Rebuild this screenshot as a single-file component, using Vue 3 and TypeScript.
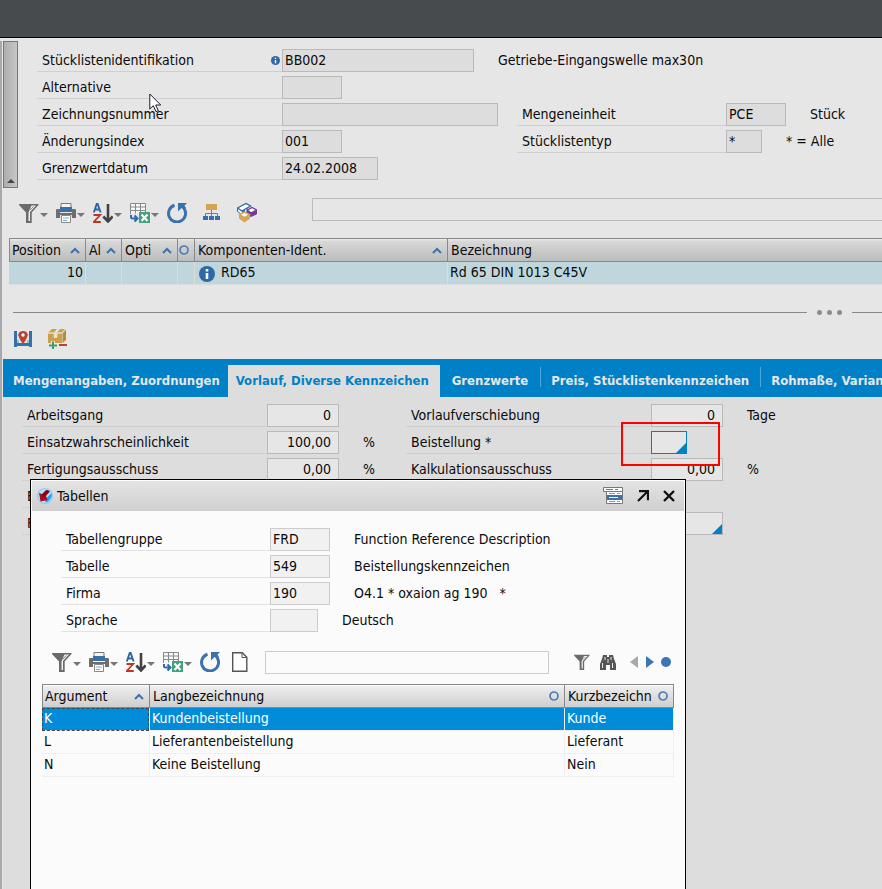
<script setup lang="ts">
interface Field {
  id: string
  label: string
  value: string
  size: string
  note?: string
  info?: boolean
  lookup?: boolean
  focused?: boolean
}

interface Tab {
  label: string
  active?: boolean
  divider?: boolean
}

const headLeft: Field[] = [
  { id: 'stkl-id', label: 'Stücklistenidentifikation', value: 'BB002', size: 'w192', note: 'Getriebe-Eingangswelle max30n', info: true },
  { id: 'alternative', label: 'Alternative', value: '', size: 'w60' },
  { id: 'zeichnung', label: 'Zeichnungsnummer', value: '', size: 'w216' },
  { id: 'index', label: 'Änderungsindex', value: '001', size: 'w60' },
  { id: 'grenzdatum', label: 'Grenzwertdatum', value: '24.02.2008', size: 'w96' },
]

const headRight: Field[] = [
  { id: 'einheit', label: 'Mengeneinheit', value: 'PCE', size: 'w60', note: 'Stück' },
  { id: 'typ', label: 'Stücklistentyp', value: '*', size: 'w36', note: '* = Alle' },
]

const tabs: Tab[] = [
  { label: 'Mengenangaben, Zuordnungen' },
  { label: 'Vorlauf, Diverse Kennzeichen', active: true },
  { label: 'Grenzwerte' },
  { label: 'Preis, Stücklistenkennzeichen', divider: true },
  { label: 'Rohmaße, Varianten', divider: true },
]

const panelLeft: Field[] = [
  { id: 'arbeitsgang', label: 'Arbeitsgang', value: '0', size: 'w72' },
  { id: 'einsatz', label: 'Einsatzwahrscheinlichkeit', value: '100,00', size: 'w72', note: '%' },
  { id: 'fertigung', label: 'Fertigungsausschuss', value: '0,00', size: 'w72', note: '%' },
  { id: 'feld-e', label: 'E', value: '', size: 'w72' },
  { id: 'feld-f', label: 'F', value: '', size: 'w72' },
]

const panelRight: Field[] = [
  { id: 'vorlauf', label: 'Vorlaufverschiebung', value: '0', size: 'w72', note: 'Tage' },
  { id: 'beistellung', label: 'Beistellung *', value: '', size: 'w36', lookup: true, focused: true },
  { id: 'kalkulation', label: 'Kalkulationsausschuss', value: '0,00', size: 'w72', note: '%' },
]

const dialogFields: Field[] = [
  { id: 'gruppe', label: 'Tabellengruppe', value: 'FRD', size: 'w60', note: 'Function Reference Description' },
  { id: 'tabelle', label: 'Tabelle', value: '549', size: 'w60', note: 'Beistellungskennzeichen' },
  { id: 'firma', label: 'Firma', value: '190', size: 'w60', note: 'O4.1 * oxaion ag 190\u00a0\u00a0 *' },
  { id: 'sprache', label: 'Sprache', value: '', size: 'w48', note: 'Deutsch' },
]

const menuIcons = ['funnel', 'printer', 'sort', 'export']

const entries = [
  { key: 'K', long: 'Kundenbeistellung', short: 'Kunde' },
  { key: 'L', long: 'Lieferantenbeistellung', short: 'Lieferant' },
  { key: 'N', long: 'Keine Beistellung', short: 'Nein' },
]
const selected = 'K'
</script>

<template>
  <div class="app">
    <svg class="sprite" aria-hidden="true">
      <symbol id="funnel" viewBox="0 0 20 20">
        <path d="M0 1h19.500v1l-6.800 7.500V20H7V9.500L0 2z" fill="#6b6b6b" />
        <path d="M12.500 2.500h4.500L11 9v9H9.500V9.500z" fill="#f0f0f0" />
        <path d="M14.500 3.500l-3.500 3.500" stroke="#8a8a8a" />
      </symbol>
      <symbol id="printer" viewBox="0 0 20 20">
        <path d="M5 .500h10v4H5z" fill="#f4f4f4" stroke="#777" />
        <path d="M1 6h3v4h12V6h3q1 0 1 1v8h-4v-3H4v3H0V7q0-1 1-1z" fill="#6e6e6e" />
        <path d="M4 4h12v5H4z" fill="#376fa9" />
        <path d="M5.500 12.500h9v7h-9z" fill="#fff" stroke="#888" />
        <path d="M7 15h6M7 17.500h4" stroke="#81a8cf" />
      </symbol>
      <symbol id="sort" viewBox="0 0 20 20">
        <path d="M.8 9.500L3.800.700h.8l3 8.800M2 6.500h4.500" fill="none" stroke="#2a66a5" stroke-width="1.900" />
        <path d="M.500 12h6.700L.800 19h7" fill="none" stroke="#bd3524" stroke-width="1.800" />
        <path d="M15 1v17M10.300 13.500l4.700 5 4.700-5" fill="none" stroke="#404246" stroke-width="2.600" />
      </symbol>
      <symbol id="export" viewBox="0 0 20 20">
        <path d="M.5.500h15v10h-15z" fill="#f8f8f8" />
        <path d="M.5 11V.5h15V9M.5 4h15M.5 7.500h15M5.500.500v10M10.500.500v9" fill="none" stroke="#85898b" />
        <path d="M1 12v2q0 1.500 2 1.500h4M4.500 12.500l3 3-3 3" fill="none" stroke="#2f6baa" stroke-width="2" />
        <path d="M9 9h11v11H9z" fill="#43a17c" />
        <path d="M11.500 11.500l6 6.500M17.500 11.500l-6 6.500" stroke="#fff" stroke-width="2" />
      </symbol>
      <symbol id="refresh" viewBox="0 0 20 20">
        <path d="M7.500 2.300A8.500 8.500 0 1 0 17 5.500" fill="none" stroke="#3a72ae" stroke-width="3" />
        <path d="M11 8.500V0h9l-2.500 2.500L19 5l-2 2-2.500-2z" fill="#3a72ae" />
      </symbol>
      <symbol id="up" viewBox="0 0 10 7">
        <path d="M1 6l4-4 4 4" fill="none" stroke="#3a72ae" stroke-width="2" />
      </symbol>
      <symbol id="ring" viewBox="0 0 10 10">
        <circle cx="5" cy="5" r="4" fill="none" stroke="#4a7fb5" stroke-width="1.700" />
      </symbol>
      <symbol id="info" viewBox="0 0 16 16">
        <circle cx="8" cy="8" r="8" fill="#2c69a6" />
        <path d="M8 3v2.500M8 7v6" stroke="#fff" stroke-width="2.600" />
      </symbol>
    </svg>

    <header class="topbar"></header>

    <main class="workspace">
      <div class="scroller"><span class="scroll-arrow"></span></div>

      <section class="head-form">
        <div class="column head-main">
          <div v-for="f in headLeft" :key="f.id" class="row">
            <label :for="f.id" class="caption">
              {{ f.label }}
              <svg v-if="f.info" class="info-small"><use href="#info" /></svg>
            </label>
            <input :id="f.id" type="text" readonly :value="f.value" :class="['field', f.size]" />
            <span v-if="f.note" class="note">{{ f.note }}</span>
          </div>
        </div>
        <div class="column head-side">
          <div v-for="f in headRight" :key="f.id" class="row">
            <label :for="f.id" class="caption">{{ f.label }}</label>
            <input :id="f.id" type="text" readonly :value="f.value" :class="['field', f.size]" />
            <span class="note">{{ f.note }}</span>
          </div>
        </div>
      </section>

      <div class="toolbar main-toolbar">
        <button v-for="name in menuIcons" :key="name" type="button" class="tool" :aria-label="name">
          <svg class="icon"><use :href="'#' + name" /></svg><span class="caret"></span>
        </button>
        <button type="button" class="tool" aria-label="refresh"><svg class="icon"><use href="#refresh" /></svg></button>
        <div class="extra">
          <button type="button" class="tool" aria-label="structure">
            <svg class="icon" viewBox="0 0 20 20">
              <path d="M3 1h11v6H3z" fill="#d5a353" />
              <path d="M8.500 7v6M2.500 13v-2.500h12V13" fill="none" stroke="#7a7d80" />
              <path d="M0 13h5v4H0zM6 13h5v4H6zM12 13h5v4h-5z" fill="#376fa9" />
            </svg>
          </button>
          <button type="button" class="tool" aria-label="modules">
            <svg class="icon" viewBox="0 0 20 20">
              <path d="M.5 5v3.500l4.500 3 5-3V3.500z" fill="#fff" stroke="#2f6baa" />
              <path d="M.5 5L9 .5l4.500 2.500L5 8z" fill="#fff" stroke="#2f6baa" stroke-width="1.400" />
              <path d="M5 8v3l3-2V6.500z" fill="#2f6baa" />
              <path d="M10.500 7v4l3.500 2.500L19.500 11V7L14 10z" fill="#753a97" stroke="#753a97" />
              <path d="M10.500 7L15 4.500 19.500 7 14 10z" fill="#fff" stroke="#753a97" stroke-width="1.400" />
              <path d="M2.500 11.500v4l5 3.500 5-3.500v-4l-5 3.500z" fill="#d9a657" stroke="#d9a657" />
              <path d="M2.500 11.500L7.500 9l5 2.500-5 3z" fill="#fff" stroke="#d5a353" stroke-width="1.400" />
            </svg>
          </button>
        </div>
        <input type="text" class="search" aria-label="Suche" />
      </div>

      <table class="grid main-grid">
        <colgroup>
          <col class="c-pos" /><col class="c-al" /><col class="c-opt" /><col class="c-ring" /><col class="c-comp" /><col />
        </colgroup>
        <thead>
          <tr>
            <th><div class="th">Position<svg class="up"><use href="#up" /></svg></div></th>
            <th><div class="th">Al<svg class="up"><use href="#up" /></svg></div></th>
            <th><div class="th">Opti<svg class="up"><use href="#up" /></svg></div></th>
            <th><div class="th only-icon"><svg class="ring"><use href="#ring" /></svg></div></th>
            <th><div class="th">Komponenten-Ident.<svg class="up"><use href="#up" /></svg></div></th>
            <th><div class="th">Bezeichnung</div></th>
          </tr>
        </thead>
        <tbody>
          <tr>
            <td class="num">10</td>
            <td></td>
            <td></td>
            <td></td>
            <td><div class="ident"><svg class="info-large"><use href="#info" /></svg>RD65</div></td>
            <td>Rd 65 DIN 1013 C45V</td>
          </tr>
        </tbody>
      </table>

      <div class="splitter">
        <span class="line"></span>
        <span class="dots"><i></i><i></i><i></i></span>
        <span class="line short"></span>
      </div>

      <div class="subtools">
        <button type="button" class="tool" aria-label="position">
          <svg class="icon" viewBox="0 0 20 20">
            <path d="M1 2h3v16H1zM16 2h3v16h-3zM1 14h18v3H1z" fill="#376fa9" />
            <path d="M5 5l2 3M15 5l-2 3M5 11v3M15 11v3" stroke="#5b8ab9" />
            <path d="M10 2q4.500 0 4.500 4.200Q14.500 9 10 15 5.500 9 5.500 6.200 5.500 2 10 2z" fill="#bd4030" />
            <circle cx="10" cy="6" r="1.700" fill="#fff" />
          </svg>
        </button>
        <button type="button" class="tool" aria-label="parts">
          <svg class="icon" viewBox="0 0 20 20">
            <path d="M1 3.500L5 0h5L7 3.500zM10 3.500L13 0h5l-3 3.500z" fill="#caa04f" />
            <path d="M1 4.500h6v4h3v-4h5V14H1z" fill="#caa04f" />
            <path d="M15.500 4L19 .500V11l-3.500 3z" fill="#b48c3e" />
            <path d="M1 4h14.500l3-3.500M7 4v4.500h3V4" fill="none" stroke="#ead9af" />
            <path d="M2 16h8M6 12v8" stroke="#e6e6e6" stroke-width="4" />
            <path d="M2 16.500h8M6 12.500v8" stroke="#3f9c76" stroke-width="2" />
            <path d="M12 16h8" stroke="#c04030" stroke-width="2" />
          </svg>
        </button>
      </div>

      <nav class="tabs">
        <button v-for="t in tabs" :key="t.label" type="button" :class="['tab', { active: t.active, divider: t.divider }]">
          {{ t.label }}
        </button>
      </nav>

      <section class="panel">
        <div class="column panel-left">
          <div v-for="f in panelLeft" :key="f.id" class="row">
            <label :for="f.id" class="caption">{{ f.label }}</label>
            <input :id="f.id" type="text" :value="f.value" :class="['field', 'right', f.size]" />
            <span v-if="f.note" class="note">{{ f.note }}</span>
          </div>
        </div>
        <div class="column panel-right">
          <div v-for="f in panelRight" :key="f.id" class="row">
            <label :for="f.id" class="caption">{{ f.label }}</label>
            <span :class="['box', { lookup: f.lookup }]">
              <input :id="f.id" type="text" :value="f.value" :class="['field', 'right', f.size, { focused: f.focused }]" />
            </span>
            <span v-if="f.note" class="note">{{ f.note }}</span>
          </div>
          <div class="row"></div>
          <div class="row trailing">
            <span class="box lookup"><input type="text" class="field w72" aria-label="Auswahl" /></span>
          </div>
          <div class="highlight"></div>
        </div>
      </section>
    </main>

    <section class="dialog" role="dialog" aria-labelledby="dialog-title">
      <header class="titlebar">
        <svg class="logo" viewBox="0 0 16 16">
          <circle cx="8" cy="8" r="8" fill="#8ecdf5" />
          <circle cx="8" cy="8" r="6.800" fill="#b9e3fb" />
          <path d="M14.500 5Q16 11 9 14.500L7.500 12z" fill="#2b9df0" />
          <path d="M2 5l3 1 4-4 4 1.500-4 4.500 1.500 4-7 1.500z" fill="#a90d1e" />
          <path d="M5 7l5-5 2.500 1L7 9z" fill="#7c0814" />
        </svg>
        <h2 id="dialog-title">Tabellen</h2>
        <button type="button" class="win" aria-label="Liste">
          <svg viewBox="0 0 20 18" class="win-list">
            <path d="M3.500 4.500h16v12h-16z" fill="#fff" stroke="#777" />
            <path d="M.5.500h19v4H.5z" fill="#fff" stroke="#777" />
            <path d="M3 2.500h7M12 2.500h3" stroke="#777" />
            <path d="M4 8h15v5H4z" fill="#3a72ae" />
            <path d="M6 6.500h6M14 6.500h3M6 14.500h6M14 14.500h3" stroke="#999" />
            <path d="M6 10.500h9" stroke="#fff" />
          </svg>
        </button>
        <button type="button" class="win" aria-label="Maximieren">
          <svg viewBox="0 0 12 12" class="win-glyph">
            <path d="M2 1.200h9v9M10.800 1.200L1 11" fill="none" stroke="#111" stroke-width="2.200" />
          </svg>
        </button>
        <button type="button" class="win" aria-label="Schließen">
          <svg viewBox="0 0 12 12" class="win-glyph">
            <path d="M1 1l10 10M11 1L1 11" stroke="#111" stroke-width="2.400" />
          </svg>
        </button>
      </header>

      <div class="column dialog-form">
        <div v-for="f in dialogFields" :key="f.id" class="row">
          <label :for="f.id" class="caption">{{ f.label }}</label>
          <input :id="f.id" type="text" readonly :value="f.value" :class="['field', f.size]" />
          <span class="note">{{ f.note }}</span>
        </div>
      </div>

      <div class="toolbar dialog-toolbar">
        <button v-for="name in menuIcons" :key="name" type="button" class="tool" :aria-label="name">
          <svg class="icon"><use :href="'#' + name" /></svg><span class="caret"></span>
        </button>
        <button type="button" class="tool" aria-label="refresh"><svg class="icon"><use href="#refresh" /></svg></button>
        <button type="button" class="tool page" aria-label="new">
          <svg class="icon" viewBox="0 0 20 20">
            <path d="M.700.700h9.600l4.500 4.500v14H.700z" fill="#fff" stroke="#555" stroke-width="1.400" />
            <path d="M10 1v4.500h4.500" fill="none" stroke="#555" />
          </svg>
        </button>
        <input type="text" class="search" aria-label="Suche in Tabelle" />
        <div class="finder">
          <button type="button" class="tool" aria-label="filter"><svg class="icon16"><use href="#funnel" /></svg></button>
          <button type="button" class="tool" aria-label="find">
            <svg class="icon16" viewBox="0 0 16 16">
              <path d="M3 1h4v2h2V1h4l1 4 2 5v6h-6v-5H6v5H0v-6l2-5z" fill="#565656" />
              <path d="M5 3v3M11 3v3M2.500 9v5M12.500 9v5M8 5v4" stroke="#e8e8e8" />
            </svg>
          </button>
          <button type="button" class="tool nav" aria-label="back"><svg class="icon8" viewBox="0 0 8 12"><path d="M8 0v12L0 6z" fill="#a8a8a8" /></svg></button>
          <button type="button" class="tool nav" aria-label="forward"><svg class="icon8" viewBox="0 0 8 12"><path d="M0 0v12l8-6z" fill="#3a76b4" /></svg></button>
          <button type="button" class="tool" aria-label="stop"><svg class="icon10" viewBox="0 0 10 10"><circle cx="5" cy="5" r="5" fill="#3a76b4" /></svg></button>
        </div>
      </div>

      <table class="grid dialog-grid">
        <colgroup><col class="d-arg" /><col /><col class="d-short" /></colgroup>
        <thead>
          <tr>
            <th><div class="th">Argument<svg class="up"><use href="#up" /></svg></div></th>
            <th><div class="th">Langbezeichnung<svg class="ring"><use href="#ring" /></svg></div></th>
            <th><div class="th">Kurzbezeichn<svg class="ring"><use href="#ring" /></svg></div></th>
          </tr>
        </thead>
        <tbody>
          <tr v-for="e in entries" :key="e.key" :class="{ selected: e.key === selected }">
            <td>{{ e.key }}</td>
            <td>{{ e.long }}</td>
            <td>{{ e.short }}</td>
          </tr>
        </tbody>
      </table>
    </section>

    <svg class="pointer" viewBox="0 0 13 20">
      <path d="M.8 1v15l3.500-3.300 2.700 6 2.300-1-2.600-5.700h5z" fill="#fff" stroke="#1c1c2c" />
    </svg>
  </div>
</template>

<style>
body {
  margin: 0;
  background: #e6e6e6;
}
</style>

<style scoped>
* {
  box-sizing: border-box;
}
.app {
  position: relative;
  display: flex;
  flex-direction: column;
  min-height: 100vh;
  overflow: hidden;
  background: #e6e6e6;
  color: #0a0a0a;
  font: 14px/22px "DejaVu Sans Condensed", Verdana, sans-serif;
}
.sprite {
  position: absolute;
  width: 0;
  height: 0;
}
svg {
  display: block;
  flex: none;
}
button,
input {
  margin: 0;
  font: inherit;
  color: inherit;
}
button {
  border: 0;
  padding: 0;
  background: none;
}
.topbar {
  height: 38px;
  background: #474b4e;
  border-bottom: 1px solid #000;
}
.workspace {
  position: relative;
  display: flex;
  flex: 1;
  flex-direction: column;
  margin-top: 3px;
  border-left: 2px solid #a9a9ac;
  padding-left: 1px;
}
.scroller {
  position: absolute;
  top: 0;
  left: 1px;
  display: flex;
  align-items: flex-end;
  justify-content: center;
  width: 15px;
  height: 147px;
  padding-bottom: 4px;
  border: 1px solid #777;
  background: linear-gradient(90deg, #aeaeae, #c6c6c6);
}
.scroll-arrow {
  border: 4px solid transparent;
  border-top: 0;
  border-bottom-color: #444;
}

/* Label, field and note rows */
.column {
  display: flex;
  flex-direction: column;
  gap: 4px;
}
.row {
  display: flex;
  height: 23px;
  line-height: 23px;
  white-space: nowrap;
}
.caption {
  display: flex;
  flex: none;
  align-items: center;
  justify-content: space-between;
  padding: 1px 2px 0 5px;
  border-bottom: 1px solid #cfcfcf;
}
.field {
  flex: none;
  height: 23px;
  padding: 0 2px;
  border: 1px solid #b9b9b9;
  border-radius: 0;
  background: #ddd;
  outline: 0;
}
.field.right {
  padding-right: 7px;
  text-align: right;
}
.note {
  margin-left: 24px;
}
.w36 { width: 36px; }
.w48 { width: 48px; }
.w60 { width: 60px; }
.w72 { width: 72px; }
.w96 { width: 96px; }
.w192 { width: 192px; }
.w216 { width: 216px; }
.info-small {
  width: 9px;
  height: 9px;
}
.head-form {
  display: flex;
  padding: 8px 0 0 34px;
}
.head-main {
  width: 480px;
}
.head-main .caption {
  width: 245px;
}
.head-side {
  padding-top: 54px;
}
.head-side .caption {
  width: 209px;
}

/* Toolbars */
.toolbar {
  display: flex;
  align-items: flex-end;
  gap: 8px;
}
.main-toolbar {
  height: 25px;
  margin-top: 18px;
  padding-left: 16px;
}
.tool {
  display: flex;
  align-items: center;
  gap: 1px;
}
.icon {
  width: 20px;
  height: 20px;
}
.icon16 { width: 16px; height: 16px; }
.icon8 { width: 8px; height: 12px; }
.icon10 { width: 10px; height: 10px; }
.caret {
  margin-top: 4px;
  border: 4px solid transparent;
  border-top-color: #777;
  border-bottom: 0;
}
.extra {
  display: flex;
  gap: 14px;
  margin-left: 8px;
}
.search {
  flex: 1;
  align-self: flex-start;
  min-width: 0;
  height: 23px;
  border: 1px solid #bbb;
  border-radius: 0;
  background: transparent;
}
.main-toolbar .search {
  margin-left: 47px;
  border-right: 0;
}

/* Tables */
.grid {
  table-layout: fixed;
  border-collapse: separate;
  border-spacing: 0;
}
.grid th {
  height: 24px;
  padding: 0;
  border: 1px solid #84898c;
  border-right: 0;
  background: linear-gradient(#efefef 0, #d9d9d9 2px, #bcbcbc 100%);
  font-weight: normal;
  text-align: left;
}
.th {
  display: flex;
  align-items: center;
  justify-content: space-between;
  height: 22px;
  padding: 0 5px 0 2px;
  overflow: hidden;
  white-space: nowrap;
}
th + th .th {
  padding-left: 3px;
}
th + th .th.only-icon {
  padding-left: 1px;
}
.up {
  width: 10px;
  height: 7px;
}
.ring {
  width: 10px;
  height: 10px;
}
.grid td {
  height: 23px;
  padding: 0 2px;
  border-bottom: 1px solid #dcdcdc;
  line-height: 20px;
  vertical-align: top;
  white-space: nowrap;
}
.grid td + td {
  border-left: 1px solid #dcdcdc;
}
.main-grid {
  width: calc(100% - 6px);
  margin: 15px 0 0 6px;
}
.main-grid td {
  background: #c0d6dd;
}
.c-pos { width: 76px; }
.c-al { width: 36px; }
.c-opt { width: 56px; }
.c-ring { width: 17px; }
.c-comp { width: 253px; }
.grid .num {
  text-align: right;
}
.ident {
  display: flex;
  gap: 6px;
  padding-left: 2px;
}
.info-large {
  width: 16px;
  height: 16px;
  margin-top: 4px;
}

.splitter {
  display: flex;
  align-items: center;
  height: 7px;
  margin-top: 24px;
  padding-left: 10px;
}
.line {
  flex: 1;
  height: 1px;
  background: #888;
}
.line.short {
  flex: 0 0 30px;
}
.dots {
  display: flex;
  gap: 5px;
  margin: 0 10px;
}
.dots i {
  width: 5px;
  height: 5px;
  border-radius: 50%;
  background: #8a8d90;
}
.subtools {
  display: flex;
  gap: 14px;
  height: 43px;
  padding: 13px 0 0 10px;
  align-items: flex-start;
}

/* Tabs */
.tabs {
  display: flex;
  height: 38px;
  padding-top: 6px;
  overflow: hidden;
  background: #0080c6;
}
.tab {
  position: relative;
  flex: none;
  padding: 0 12px;
  color: #e6e6e6;
  font: bold 13px/30px "DejaVu Sans Condensed", Verdana, sans-serif;
  white-space: nowrap;
}
.tab:first-child {
  padding: 0 8px 0 10px;
}
.tab.active {
  padding: 0 11px 0 8px;
  background: #ddd;
  color: #0080c6;
}
.tab.divider {
  padding: 0 11px;
}
.tab.divider::before {
  position: absolute;
  top: 2px;
  left: 0;
  width: 1px;
  height: 20px;
  background: #4da6d8;
  content: "";
}
.panel {
  display: flex;
  flex: 1;
  padding: 7px 0 0 19px;
  background: #ddd;
}
.panel .field {
  background: #e6e6e6;
}
.panel-left {
  width: 384px;
}
.panel .caption {
  width: 245px;
}
.panel-right {
  position: relative;
}
.panel .field.focused {
  border-color: #0080c6;
}
.box {
  position: relative;
  display: flex;
}
.lookup::after {
  position: absolute;
  right: 1px;
  bottom: 1px;
  border: 5px solid #0080c6;
  border-top-color: transparent;
  border-left-color: transparent;
  content: "";
}
.trailing {
  padding-left: 245px;
}
.highlight {
  position: absolute;
  top: 18px;
  left: 215px;
  width: 99px;
  height: 44px;
  border: 2px solid #f00;
}

/* Lookup window */
.dialog {
  position: absolute;
  top: 479px;
  bottom: 0;
  left: 30px;
  width: 656px;
  border: 1px solid #000;
  border-bottom: 0;
  background: #fbfbfb;
}
.titlebar {
  display: flex;
  align-items: center;
  height: 31px;
  margin: 0 1px;
  padding: 0 9px 0 5px;
  border-top: 1px solid #fff;
  background: linear-gradient(#e4e4e4, #cfcfcf);
}
.logo {
  width: 16px;
  height: 16px;
}
.titlebar h2 {
  flex: 1;
  margin: 0 0 0 4px;
  font: inherit;
}
.win {
  margin-left: 14px;
}
.win-list {
  width: 20px;
  height: 18px;
}
.win-glyph {
  width: 12px;
  height: 12px;
}
.dialog-form {
  padding: 17px 0 0 30px;
}
.dialog-form .caption {
  width: 209px;
  border-color: #e2e2e2;
}
.dialog-form .field {
  border-color: #ccc;
  background: #f1f1f1;
}
.dialog-toolbar {
  align-items: center;
  height: 22px;
  margin-top: 19px;
  padding: 0 14px 0 21px;
}
.page {
  margin-left: 4px;
}
.dialog-toolbar .search {
  margin-left: 5px;
  border-color: #ccc;
}
.finder {
  display: flex;
  align-items: center;
  gap: 10px;
  margin-left: 17px;
}
.finder .nav {
  margin-left: 4px;
}
.finder .nav + .nav {
  margin-left: -2px;
}
.finder .nav + .tool:last-child {
  margin-left: -3px;
}
.dialog-grid {
  width: calc(100% - 22px);
  margin: 11px 11px 0;
}
.dialog-grid th {
  background: linear-gradient(#fff 0, #ececec 2px, #cfcfcf 100%);
}
.dialog-grid th:last-child {
  border-right: 1px solid #84898c;
}
.grid.dialog-grid td {
  border-color: #efefef;
}
.dialog-grid td:last-child {
  border-right: 1px solid #efefef;
}
.dialog-grid .selected td {
  background: #008cd8;
  color: #fff;
}
.dialog-grid .selected td:first-child {
  outline: 1px dashed #444;
  outline-offset: -1px;
}
.d-arg { width: 107px; }
.d-short { width: 110px; }

.pointer {
  position: absolute;
  top: 93px;
  left: 149px;
  width: 13px;
  height: 20px;
}
</style>
